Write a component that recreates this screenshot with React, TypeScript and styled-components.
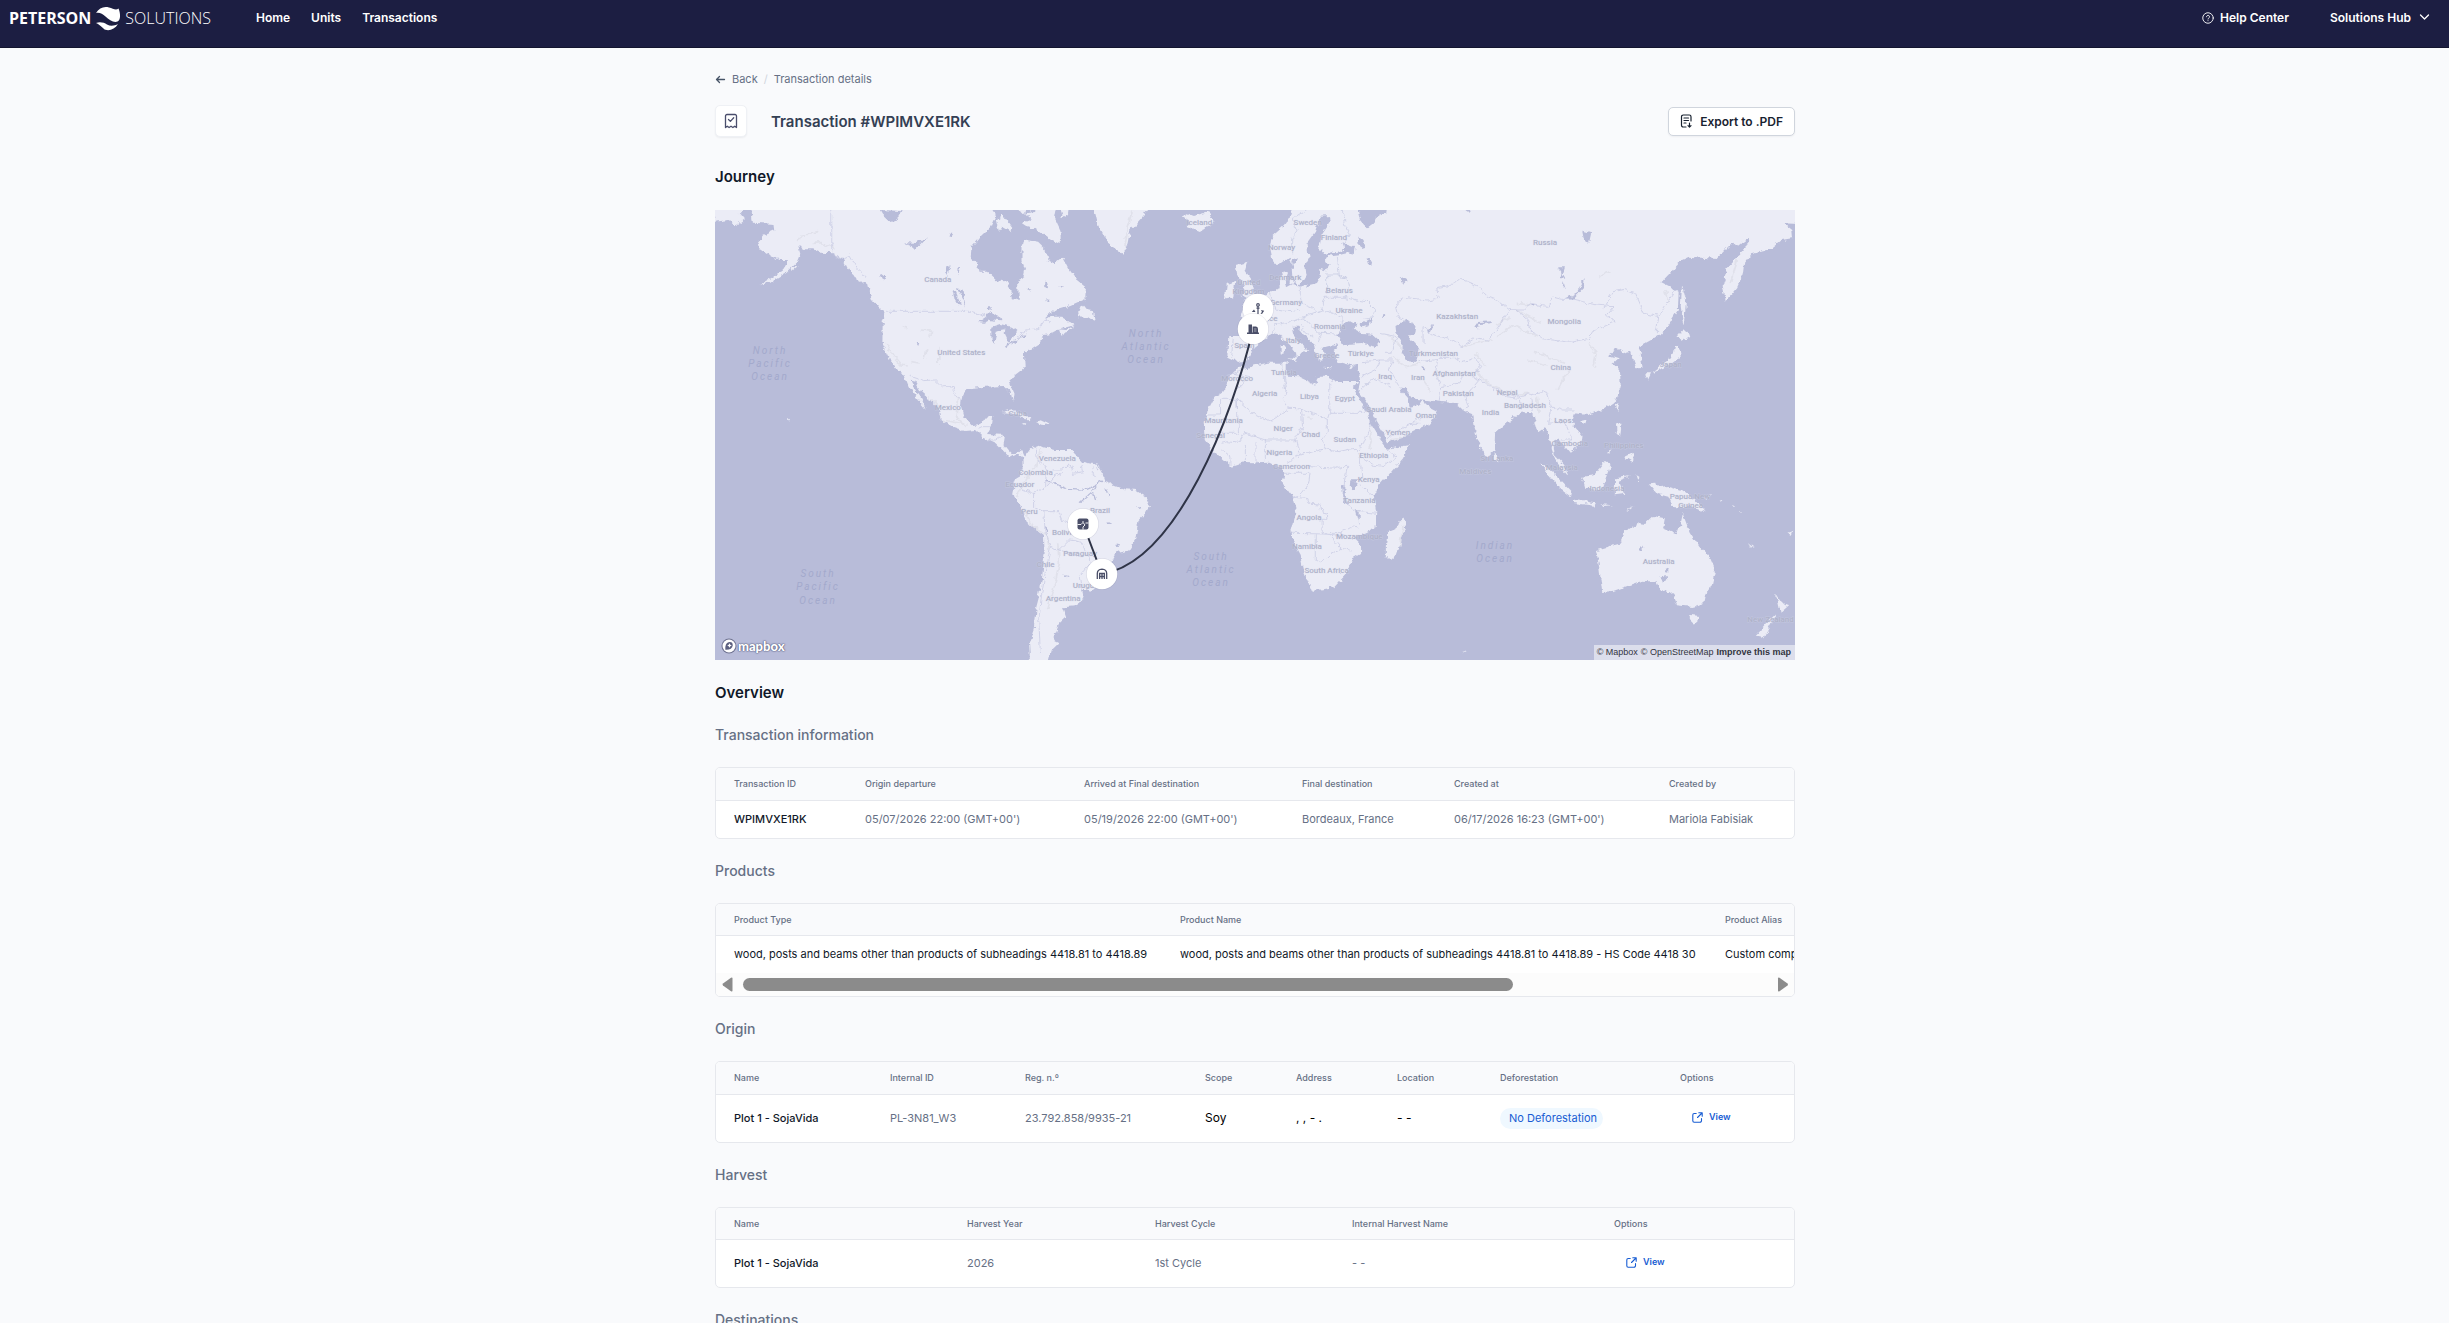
import React from 'react';
import styled, { createGlobalStyle, css } from 'styled-components';

const GlobalStyle = createGlobalStyle`
  *, *::before, *::after { box-sizing: border-box; }
  body {
    margin: 0;
    background: #f9fafc;
    color: #101828;
    font-family: Inter, "Liberation Sans", sans-serif;
    overflow: hidden auto;
    scrollbar-width: none;
  }
  h1, h2, h3 { margin: 0; }
  button { font-family: inherit; cursor: pointer; }
  a { text-decoration: none; color: inherit; }
`;

/* ---------- top bar ---------- */

const TopBar = styled.header`
  display: flex;
  align-items: center;
  justify-content: space-between;
  height: 48px;
  padding: 0 19px 12px 9px;
  background: #1c1e42;
  border-bottom: 1px solid #13152f;
  color: #fff;
`;

const TopGroup = styled.div`
  display: flex;
  align-items: center;
`;

const Brand = styled.a`
  display: flex;
  align-items: center;
  gap: 4px;
  margin-right: 45px;
  font-family: "Open Sans", "Noto Sans", sans-serif;
  font-size: 16px;
  line-height: 20px;
`;

const BrandStrong = styled.span`
  font-weight: 700;
`;

const BrandLight = styled.span`
  font-weight: 300;
`;

const Nav = styled.nav`
  display: flex;
  gap: 21px;
`;

const NavLink = styled.a`
  display: inline-flex;
  align-items: center;
  gap: 6px;
  font-size: 12px;
  line-height: 16px;
  font-weight: 600;
`;

const HubButton = styled.button`
  display: inline-flex;
  align-items: center;
  gap: 8px;
  margin-left: 41px;
  padding: 0;
  border: 0;
  background: none;
  color: inherit;
  font-size: 12px;
  line-height: 16px;
  font-weight: 600;
`;

/* ---------- page ---------- */

const Page = styled.main`
  padding: 23px 0 0 61px;
`;

const Content = styled.div`
  width: 100%;
  max-width: 1080px;
  margin: 0 auto;
`;

const Breadcrumb = styled.nav`
  display: flex;
  align-items: center;
  gap: 6px;
  font-size: 11px;
  line-height: 16px;
  color: #667085;
`;

const Slash = styled.span`
  color: #d0d5dd;
`;

const TitleRow = styled.div`
  display: flex;
  align-items: center;
  height: 32px;
  margin: 18px 0 28px;
`;

const TitleIcon = styled.div`
  display: flex;
  align-items: center;
  justify-content: center;
  width: 32px;
  height: 32px;
  margin-right: 24px;
  background: #fff;
  border: 1px solid #eff1f5;
  border-radius: 5px;
  box-shadow: 0 1px 2px rgba(16, 24, 40, 0.06);
`;

const Title = styled.h1`
  flex: 1;
  padding-top: 2px;
  font-size: 15px;
  line-height: 24px;
  font-weight: 600;
  color: #344054;
`;

const ExportButton = styled.button`
  display: inline-flex;
  align-items: center;
  gap: 8px;
  height: 29px;
  padding: 0 11px;
  background: #fff;
  border: 1px solid #d0d5dd;
  border-radius: 5px;
  box-shadow: 0 1px 2px rgba(16, 24, 40, 0.05);
  font-size: 12px;
  font-weight: 600;
  color: #182230;
`;

const SectionTitle = styled.h2`
  margin-bottom: 21px;
  font-size: 15px;
  line-height: 24px;
  font-weight: 600;
  color: #101828;
`;

const SubTitle = styled.h3`
  margin-bottom: 23px;
  font-size: 14px;
  line-height: 18px;
  font-weight: 500;
  color: #667085;
`;

/* ---------- map ---------- */

const MapFrame = styled.div`
  position: relative;
  margin-bottom: 21px;
  overflow: hidden;
`;

const MapSvg = styled.svg`
  display: block;
  width: 100%;
  height: auto;
  background: #b8bcd9;
`;

const CountryLabel = styled.text`
  font-family: Roboto, sans-serif;
  font-size: 8px;
  font-weight: 500;
  text-anchor: middle;
  fill: #aeb2c9;
  stroke: #dcdeed;
  stroke-opacity: 0.35;
  stroke-width: 1px;
  paint-order: stroke;
`;

const OceanLabel = styled.text`
  font-family: Roboto, sans-serif;
  font-size: 10px;
  font-style: italic;
  letter-spacing: 2px;
  text-anchor: middle;
  fill: #a3a9cc;
`;

const MapLogo = styled.a`
  position: absolute;
  left: 6px;
  bottom: 6px;
  display: flex;
  align-items: center;
  gap: 1px;
  font-family: Lato, sans-serif;
  font-size: 13px;
  line-height: 16px;
  font-weight: 900;
  color: #fff;
  text-shadow: 0 0 1px #5c6080, 0 0 1px #5c6080, 0 0 2px #5c6080;
`;

const Attribution = styled.div`
  position: absolute;
  right: 0;
  bottom: 0;
  display: flex;
  gap: 3px;
  padding: 0 4px 0 3px;
  background: rgba(255, 255, 255, 0.5);
  font-family: "Liberation Sans", sans-serif;
  font-size: 9px;
  line-height: 15px;
  color: #33353f;
`;

const Improve = styled.a`
  font-weight: 700;
`;

/* ---------- tables ---------- */

const Card = styled.div`
  margin-bottom: 23px;
  background: #fff;
  border: 1px solid #e6e8ed;
  border-radius: 5px;
  overflow: hidden;
`;

const Table = styled.table`
  width: 100%;
  table-layout: fixed;
  border-collapse: separate;
  border-spacing: 0;
`;

const Col = styled.col<{ $w?: number }>`
  width: ${(p) => (p.$w ? `${p.$w}px` : 'auto')};
`;

const Th = styled.th<{ $short?: boolean }>`
  height: ${(p) => (p.$short ? 32 : 33)}px;
  padding: 0 0 0 18px;
  background: #f9fafc;
  border-bottom: 1px solid #e6e8ed;
  text-align: left;
  white-space: nowrap;
  font-size: 9px;
  line-height: 12px;
  font-weight: 500;
  color: #667085;
`;

type Tone = 'strong' | 'muted' | 'dark' | 'plain';

const tones = {
  strong: css`font-size: 11px; font-weight: 500; color: #101828;`,
  muted: css`font-size: 11px; font-weight: 400; color: #667085;`,
  dark: css`font-size: 11px; font-weight: 400; color: #101828;`,
  plain: css`font-size: 12px; font-weight: 400; color: #000;`,
};

const Td = styled.td<{ $tone: Tone; $tall?: boolean }>`
  height: ${(p) => (p.$tall ? 47 : 37)}px;
  padding: 0 0 1px 18px;
  white-space: nowrap;
  line-height: 16px;
  ${(p) => tones[p.$tone]}
`;

const Badge = styled.span`
  display: inline-block;
  padding: 0 6px 0 9px;
  border-radius: 11px;
  background: #eff8ff;
  font-size: 11px;
  line-height: 21px;
  font-weight: 400;
  color: #175cd3;
`;

const ViewButton = styled.button`
  display: inline-flex;
  align-items: center;
  gap: 6px;
  padding: 0 12px;
  border: 0;
  background: none;
  font-size: 9px;
  line-height: 16px;
  font-weight: 600;
  color: #175cd3;
`;

const ScrollRow = styled.div`
  display: flex;
  align-items: center;
  height: 23px;
  padding: 0 5px;
  background: #fcfcfc;
`;

const ScrollArrow = styled.button`
  display: flex;
  padding: 0;
  border: 0;
  background: none;
`;

const ScrollTrack = styled.div`
  flex: 1;
  margin: 0 6px 0 9px;
`;

const ScrollThumb = styled.div`
  width: 75%;
  height: 13px;
  border-radius: 7px;
  background: #8b8b8b;
`;

/* ---------- icons ---------- */

const BrandMark = () => (
  <svg width="26" height="26" viewBox="0 0 26 26" aria-hidden="true" fill="#fff">
    <path d="M1 8C4 3 9 1 14 2.500C18 3.600 21 5.500 23.500 3.500C25.500 8 26 15 22.500 16.500C19 18 14 15 10.500 11.500C7.500 8.500 4 7 1 8Z" />
    <path d="M1 18C5 16.500 9 17.500 12 19.500C16 21.800 20 20.500 23 19C20 24 15 26 10.500 24.800C8 24 7 21 1 18Z" />
  </svg>
);

const HelpIcon = () => (
  <svg width="12" height="12" viewBox="0 0 24 24" fill="none" stroke="#fff" strokeWidth="1.8" strokeLinecap="round" aria-hidden="true">
    <circle cx="12" cy="12" r="10.500" />
    <path d="M9 9.500a3 3 0 1 1 4.500 2.700C12.400 12.900 12 13.200 12 14" />
    <path d="M12 17.300v.2" />
  </svg>
);

const ChevronDown = () => (
  <svg width="11" height="12" viewBox="0 0 11 12" fill="none" stroke="#fff" strokeWidth="1.3" strokeLinecap="round" strokeLinejoin="round" aria-hidden="true">
    <path d="M1.500 3l4 4 4-4" />
  </svg>
);

const ArrowLeft = () => (
  <svg width="11" height="10" viewBox="0 0 11 10" fill="none" stroke="#475467" strokeWidth="1.3" strokeLinecap="round" strokeLinejoin="round" aria-hidden="true">
    <path d="M9.500 5.500H1.500M4.500 2.500l-3 3 3 3" />
  </svg>
);

const ReceiptIcon = () => (
  <svg width="14" height="16" viewBox="0 0 14 16" fill="none" stroke="#4a4e6c" strokeWidth="1.3" strokeLinecap="round" strokeLinejoin="round" aria-hidden="true">
    <path d="M1.500 14.500V3a1.500 1.500 0 0 1 1.500-1.500h8A1.500 1.500 0 0 1 12.500 3V14.500l-1.800-1.300-1.800 1.300L7 13.200 5.100 14.500l-1.800-1.300Z" />
    <path d="M4.500 6.500l1.900 1.900 3.300-3.600" />
  </svg>
);

const ExportIcon = () => (
  <svg width="12" height="14" viewBox="0 0 12 14" fill="none" stroke="#182230" strokeWidth="1.2" strokeLinecap="round" strokeLinejoin="round" aria-hidden="true">
    <path d="M6 13H3.200A1.700 1.700 0 0 1 1.500 11.300V2.700A1.700 1.700 0 0 1 3.200 1h6.100A1.700 1.700 0 0 1 11 2.700V7M4 4h4.500M4 6.500h4.500M4 9h2M9.500 9v4M8 11.600l1.500 1.500 1.500-1.500" />
  </svg>
);

const ExternalIcon = () => (
  <svg width="11" height="11" viewBox="0 0 11 11" fill="none" stroke="#175cd3" strokeWidth="1.100" strokeLinecap="round" strokeLinejoin="round" aria-hidden="true">
    <path d="M4.200 1.500H2.200A1.500 1.500 0 0 0 .8 3v5.700a1.500 1.500 0 0 0 1.400 1.500H8a1.500 1.500 0 0 0 1.500-1.500V6.500M6.800.8h3.400v3.400M10 1L5.500 5.500" />
  </svg>
);

const Triangle = ({ flip }: { flip?: boolean }) => (
  <svg width="13" height="15" viewBox="0 0 13 15" aria-hidden="true">
    <path
      d={flip ? 'M2 1.500Q2 0 3.500 .8L11.500 6.500Q12.500 7.500 11.500 8.500L3.500 14.200Q2 15 2 13.500Z' : 'M11.500 1.500Q11.500 0 10 .8L2 6.500Q1 7.500 2 8.500L10 14.200Q11.500 15 11.500 13.500Z'}
      fill="#8b8b8b"
    />
  </svg>
);

/* ---------- map data ---------- */

type Place = [string, number, number];

const WEST_LAND = [
  // North and South America
  'M170 -9L105 -9 110 38 170 42 172 60 140 75 125 95 130 115 152 130 185 150 215 150 198 178 165 203 128 226 170 212 208 188 236 160 248 130 242 108 262 118 285 118 305 128 345 130 372 150 385 178 402 192 418 218 440 216 445 240 455 265 475 290 495 310 487 335 486 400 500 430 512 458 530 482 550 495 562 528 580 556 612 597 600 566 582 540 568 512 582 516 600 548 625 570 650 600 655 628 690 650 725 663 755 660 775 680 815 700 830 715 848 734 865 742 885 732 893 745 893 780 870 812 863 850 885 885 905 935 955 975 957 1030 950 1100 940 1160 930 1200 925 1260 912 1300 915 1359 965 1359 975 1320 995 1300 985 1280 1000 1240 1020 1220 1010 1192 1055 1188 1070 1160 1065 1135 1092 1146 1125 1110 1150 1055 1165 1030 1200 1022 1220 990 1230 930 1250 910 1263 885 1250 860 1220 840 1190 838 1135 815 1130 800 1110 765 1065 755 1035 720 985 720 955 712 940 704 915 715 896 742 888 724 865 736 850 720 838 705 842 675 790 672 805 642 808 618 785 620 770 642 745 646 722 620 714 590 718 555 735 535 785 530 840 528 858 545 865 575 870 552 855 515 872 494 902 470 900 430 925 412 945 398 955 375 975 372 1000 358 1044 345 1015 325 1008 320 978 320 955 328 985 300 1035 285 1078 265 1080 235 1050 210 1030 180 1010 140 985 160 965 150 960 120 935 95 895 88 890 110 890 150 900 180 895 205 880 212 882 270 865 265 850 215 815 210 790 185 765 185 760 155 742 145 745 110 770 80 800 50 815 15 800 -9Z',
  'M-9 -9L0 35 40 30 60 46 84 28 72 12 86 -9Z',
  'M890 40L920 28 900 10 905 -9 990 -9 985 20 1003 60 1004 102 980 90 940 62 905 50Z',
  'M815 28L835 12 862 50 858 64 835 50 824 66Z',
  'M875 -9L890 12 930 5 930 -9Z',
  'M1000 -9L1010 22 1025 12 1028 -9Z',
  'M1055 322L1070 285 1080 298 1100 300 1105 332 1080 324Z',
  'M1100 -9L1112 45 1140 100 1185 133 1198 100 1205 62 1240 22 1265 -9Z',
  'M1355 20L1372 10 1390 18 1435 6 1450 35 1408 66 1370 50 1378 35Z',
  'M832 606L862 598 890 612 922 627 900 628 875 612Z',
  'M930 640L945 628 970 640 950 648Z',
  'M890 642l14 1-4 4Z',
  'M220 170l20 2-14 12Z',
  'M995 358l25 2 20-12-12 18-28 8Z',
  'M212 626l6 6-5 4Z',
];

const WEST_WATER = [
  'M764 336L785 322 800 304 822 318 834 334 815 332 795 330 780 338Z',
  'M802 350L828 342 862 350 878 362 868 384 850 398 838 372 840 358 818 362 812 398 803 392Z',
  'M842 405L880 388 874 396 845 411Z',
  'M880 384L905 370 900 380Z',
  'M548 96L580 98 618 78 600 98 580 120 572 105Z',
  'M690 242L700 250 714 285 706 282 694 262Z',
  'M702 235L718 238 728 290 716 262Z',
  'M480 0L545 4 530 30 512 38 488 14Z',
  'M478 188L490 198 504 198 488 208Z',
  'M672 168L684 166 674 196 668 186Z',
  'M703 178l10-8-6 22Z',
  'M680 68l12 0-4 14-9-4Z',
  'M956 218l12 2 2 12-14-4Z',
  'M998 228l16 2-10 6Z',
  'M905 234l14 1-10 5Z',
  'M962 264l12 4-6 10Z',
  'M792 286l8 0 1 14-8-3Z',
  'M1164 1000l9 2-4 10-6-5Z',
  'M1015 1096l12 3-8 6Z',
  'M585 396l8 4-4 10Z',
  'M1222 887l16 10-8 0Z',
  'M958 948l8 6-4 10Z',
  'M1140 936l10 5-8 4Z',
];

const WEST_BORDERS = [
  'M339 0V130L372 148 392 138 410 170 438 200',
  'M500 304H740L785 318M880 378L905 360 940 356 958 330 975 335',
  'M565 498L605 512 640 510 660 530 685 530 702 560 716 570',
  'M765 655L775 650 798 650M790 690L815 690 838 676',
  'M935 710L932 745 962 770 960 830M983 780L1010 780 1030 760 1040 790 1070 785 1065 762M1098 768L1095 790 1108 800',
  'M895 775L865 820 888 835 925 850 925 890 955 905 1000 905 1010 930 1060 960M960 830L985 800 1010 790M960 830L925 850',
  'M955 905L958 960 975 1010 1000 1020 1030 990 1062 996 1085 1040 1090 1060M975 1010L960 1080 948 1160 940 1230 945 1330M1090 1060L1060 1095 1065 1130M1000 1020L1060 1040',
];

const WEST_RIVERS = ['M960 810L1020 835 1080 838 1130 815M1060 878L1095 845 1108 825M1105 870L1098 850M1145 858L1132 835'];

const WEST_RELIEF = [
  'M500 405L520 440 540 465 560 468M600 360L635 365 620 380M615 420L610 450M650 410V465M545 350l15 4M570 455l22 4',
  'M240 90L270 70 300 65M280 100L310 98 350 115M705 560L700 620 730 650M620 560L650 590M660 630L715 640',
  'M945 720L930 770 890 830 875 860M895 900L925 950 965 975 970 1020M995 1000L1000 1060 985 1130 965 1200',
  'M1212 0L1200 50 1190 110',
];

const EUROPE_LAND = [
  'M250 -9L242 20 225 45 185 80 180 112 190 158 205 166 238 140 248 172 250 200 262 226 278 215 290 195 285 165 296 145 290 100 315 65 330 20 360 18 362 35 335 75 328 115 345 135 400 120 425 126 385 136 350 140 343 152 362 162 350 184 328 180 330 205 322 220 280 230 240 225 228 232 225 215 234 188 225 180 210 200 212 235 180 245 160 265 130 285 105 282 95 320 108 345 102 378 55 378 52 440 85 456 112 450 132 410 165 385 190 368 212 376 240 402 258 425 260 448 276 425 298 422 270 400 250 375 245 350 262 350 288 382 312 402 318 440 335 452 345 432 335 412 372 408 385 400 374 430 385 455 425 466 458 456 450 515 720 560 720 -9Z',
  'M80 165L112 155 104 182 124 212 134 248 152 272 95 287 112 265 95 255 106 228 90 215 84 190Z',
  'M45 265L50 222 76 212 70 262Z',
  'M232 442L260 444 254 456Z',
  'M212 408L224 408 220 432 212 430Z',
  'M214 380l8 2-4 18Z',
  'M340 470l28 2-10 4Z',
  'M418 470l16-5-8 10Z',
  'M240 210l12 2-4 14-10-5Z',
];

const EUROPE_WATER = [
  'M385 378L395 340 420 334 442 346 428 356 458 372 490 374 512 395 500 411 455 402 400 406Z',
  'M448 342L488 322 478 346 458 352Z',
  'M340 413L372 404 366 416 345 418Z',
  'M402 98l30 10-4 26-22-10Z',
  'M442 80L460 86 466 116 446 102Z',
  'M250 148l14-6-4 16-14 4Z',
  'M470 148l14 6 0 12-10-4Z',
  'M572 203l18 6-12 12Z',
  'M440 -9L450 30 470 55 490 40 500 20 532 8 534 -9Z',
  'M520 308l6 8-10 10Z',
];

const EAST_LAND = [
  // Asia
  'M280 -9L250 300 300 470 306 515 300 540 326 578 350 626 375 670 383 697 410 690 460 665 510 640 528 605 500 590 490 570 470 586 450 590 444 566 425 545 420 525 440 540 460 566 500 570 540 576 590 580 600 600 630 612 635 650 655 710 675 740 695 720 697 670 730 640 765 610 795 605 810 620 822 667 845 650 860 700 865 730 885 770 906 798 898 765 870 735 866 690 880 682 900 710 914 728 945 702 948 675 920 640 928 610 965 615 1010 600 1045 575 1062 530 1060 490 1040 460 1056 445 1025 435 1052 414 1075 430 1092 425 1108 475 1125 474 1120 430 1112 412 1150 390 1180 370 1200 345 1228 300 1230 245 1215 235 1180 217 1240 150 1260 140 1340 147 1385 98 1400 112 1435 83 1420 120 1372 175 1357 220 1367 272 1400 232 1416 195 1420 160 1440 130 1500 115 1530 90 1562 84 1560 60 1535 40 1577 42 1577 -9Z',
  // Africa
  'M-53 473L-78 510 -88 540 -118 560 -138 600 -146 640 -143 690 -118 725 -68 770 -28 756 0 757 45 755 72 770 86 790 80 820 105 855 120 905 106 960 108 990 130 1032 140 1080 165 1143 230 1132 265 1092 278 1052 305 1035 305 1000 290 985 350 955 352 905 345 860 360 828 400 780 430 745 444 706 385 716 365 690 335 640 310 582 284 530 306 516 240 516 210 500 182 500 175 524 130 502 92 500 92 458 40 458 0 466 -20 474Z',
  // Oceania and the islands
  'M990 1020L1060 1000 1075 965 1115 940 1130 942 1155 918 1190 925 1185 955 1225 973 1235 945 1242 912 1262 965 1290 1010 1320 1040 1336 1080 1325 1130 1308 1150 1302 1180 1270 1188 1225 1183 1215 1155 1195 1140 1180 1145 1165 1115 1125 1112 1075 1130 1040 1143 1008 1146 1005 1120 998 1060Z',
  'M1260 1214L1292 1218 1276 1247Z',
  'M1510 1150L1530 1180 1552 1184 1526 1208 1520 1180Z',
  'M1515 1208L1476 1285 1453 1280 1490 1235Z',
  'M430 922L438 945 405 1046 380 1045 380 1005 385 965 410 955Z',
  'M1243 358L1264 376 1238 392 1224 380Z',
  'M1230 404L1236 440 1200 468 1150 487 1178 466 1212 442 1220 410Z',
  'M1133 490L1150 490 1140 512Z',
  'M1240 228L1252 270 1244 352 1236 290Z',
  'M828 760L865 785 921 845 918 862 880 832 850 792Z',
  'M918 868L990 880 985 887 925 879Z',
  'M950 800L985 795 1015 755 1032 765 1020 800 1005 840 960 836Z',
  'M1045 805L1092 798 1056 812 1072 852 1045 856Z',
  'M1048 643L1064 645 1060 682 1050 670Z',
  'M1072 742L1100 728 1098 757Z',
  'M1022 730l14-18-8 18Z',
  'M1048 585L1058 579 1052 604Z',
  'M946 632l18-4-8 14Z',
  'M696 728l10 8-2 18-8-4Z',
  'M1144 820L1165 818 1170 832 1200 828 1240 840 1280 870 1308 906 1270 890 1215 892 1200 860 1170 852Z',
  'M1078 900l24-12-18 14Z',
  'M1000 882l40 4-30 2Z',
  'M1108 796l8 4-2 14Z',
  'M1300 862l24-6-14 10Z',
  'M1352 866l8 6-4 2ZM1382 884l10 6-6 0ZM1405 902l6 6-4 0Z',
  'M1432 998l18 14-4 2Z',
  'M1546 970l14-8-4 12Z',
  'M600 1321l12 2-8 5Z',
];

const EAST_WATER = [
  'M408 348L440 330 466 344 462 375 444 376 476 415 468 456 440 454 426 430 430 400 410 370Z',
  'M904 268L935 250 957 203 955 235 925 268Z',
  'M500 355l15-10 2 8-10 10Z',
  'M640 350L650 336 690 334 686 340 655 342 645 356Z',
  'M278 808l18 0 1 24-16 6-6-14Z',
  'M880 172l20 0-6 20 8 14-16-2 4-16ZM896 216l6 22-8-8Z',
  'M950 62l26 8-6 28-16-14Z',
  'M326 148l14 6-4 12Z',
  'M424 200l16 10-12 8Z',
  'M1118 1012l10 4-8 6Z',
  'M1190 1072l10 4 0 12-8-2ZM1180 1100l12-6 2 20-10 4Z',
  'M800 282l14 2-8 8Z',
  'M366 318l12-6-4 12Z',
  'M483 468l10 3-6 8Z',
  'M600 -9L632 -9 620 8Z',
  'M252 825l6 50 14 14-8-22-2-40Z',
  'M292 895l12 14 0 34-6-22Z',
];

const EAST_BORDERS = [
  'M408 290L430 262 500 270 535 265 530 232 560 228 600 208 650 230 670 258 700 270 740 300 720 330 680 390 640 384 600 410 570 390 520 375 488 350 488 405M408 290L415 320 440 330',
  'M740 300L780 300 800 280 850 290 860 260 890 268 925 268 990 285 1040 290 1020 315 1045 335 980 365 970 385 915 397 835 386 800 360 790 325 760 300Z',
  'M1010 295L1040 245 1075 238 1105 250 1130 310 1172 320 1165 370M1172 320L1220 240',
  'M475 455L520 450 530 445 580 445 600 455 640 445 655 470 630 500 655 510 700 540 760 560 830 545 850 550 860 590 890 600 925 600',
  'M530 445L525 490 540 530 535 575M540 530L590 520 620 480M655 505L610 560 620 590 600 600M700 540L730 560 770 565 775 600M800 560L805 605M860 590L850 640 900 635 920 690 890 690',
  'M310 455L365 450 400 450 390 480 405 505 420 530M310 535L345 505 400 530M383 683L450 640 480 640M450 640L490 620M365 450L350 480 312 500',
  'M217 515V607H320M217 607L210 628 135 597 100 595 82 570 92 540 85 500M210 628V665L195 690 205 720 245 725 290 715 305 740 340 765 375 770 415 740 380 715M335 640L320 690 300 720',
  'M100 595L40 635 0 615 -52 568V598M135 597L138 650 118 682 120 690 30 690 0 680M118 690L130 735 90 760M130 735L195 715M30 690L30 755M-52 568H-100V615H-142M-52 568L-48 670H-110M0 680L-30 670 -48 700 -80 695 -100 700M0 755V700M-70 768L-70 740 -95 720M-28 755V705',
  'M85 790H160L155 820 130 855 107 862 150 865 155 880 190 882 195 910 210 912 212 928 195 928 195 968 250 968 280 950 300 955M160 770L235 775 270 765 262 800 255 860 270 890 300 905 352 910M108 970L195 972 240 975 285 985M175 975V1050L190 1060 220 1030 250 1015 275 1020M220 980L250 1015M235 1085l15 10M345 860L300 820 280 810M305 740L310 800',
];

const EAST_RELIEF = [
  'M375 375L400 385 430 420M400 440L440 470 480 460M480 500L510 545M600 410L640 400 690 390M640 430L670 470M640 480L665 510 700 535 760 552 800 550M700 345L740 320M760 300L830 340M700 380L750 345 800 370 830 380M810 425L850 440 900 460M790 450L850 465M880 540L900 500 915 480M970 400L990 430 985 470M1190 240L1200 280M1400 150L1380 220M1000 200L1030 185M760 280L800 285M820 560L825 610M430 950L420 1010M390 690L440 680M330 650L340 690 330 720M150 620L165 625',
];

const EUROPE_BORDERS = [
  'M245 130L245 90 258 60 250 25 290 0M400 0L405 40 418 75 400 105M385 165L382 140M345 195L385 195 410 205M385 165L388 200 410 205 418 235 405 260M268 228V250L278 282 320 300M180 245L195 300 240 305 270 300M345 262H405L430 268 470 275 495 300 490 320 462 325M345 262L335 300 370 310 400 325 395 345M280 320L335 300M195 345L240 335 280 320 300 345 330 370 385 372M190 368L195 345M100 378L155 392M70 380L65 440M335 370L325 400M270 345L290 370 310 378M350 195L350 250',
  'M52 500L120 465M70 490L120 500 78 540M215 455L222 520 228 545M510 370L560 380 545 430 525 430',
];

const COUNTRIES_WEST: Place[] = [
  ['Iceland', 1406, 35], ['Canada', 647, 208], ['United States', 715, 426], ['Mexico', 676, 590], ['Cuba', 879, 610],
  ['Venezuela', 994, 744], ['Colombia', 931, 785], ['Ecuador', 885, 823], ['Peru', 913, 904], ['Brazil', 1118, 899],
  ['Bolivia', 1013, 967], ['Paraguay', 1060, 1028], ['Chile', 960, 1063], ['Uruguay', 1082, 1125], ['Argentina', 1011, 1163],
  ['Morocco', 1516, 505], ['Mauritania', 1477, 631], ['Senegal', 1439, 674], ['Spain', 1537, 404], ['United', 1550, 215],
  ['Kingdom', 1549, 243], ['Algeria', 1596, 549], ['France', 1598, 323],
];

const COUNTRIES_EAST: Place[] = [
  ['Sweden', 153, 36], ['Finland', 229, 81], ['Norway', 77, 111], ['Denmark', 88, 202], ['Belarus', 245, 240], ['Germany', 90, 276],
  ['Ukraine', 273, 300], ['Romania', 217, 347], ['Italy', 111, 389], ['Greece', 208, 436], ['Türkiye', 307, 430], ['Tunisia', 84, 485],
  ['Libya', 158, 559], ['Egypt', 261, 565], ['Iraq', 378, 497], ['Iran', 473, 502], ['Türkmenistan', 518, 429],
  ['Afghanistan', 578, 488], ['Pakistan', 590, 548], ['Kazakhstan', 587, 317], ['Russia', 842, 96], ['Mongolia', 898, 334],
  ['China', 888, 470], ['Nepal', 732, 547], ['Bangladesh', 784, 586], ['India', 684, 607], ['Laos', 894, 630], ['Japan', 1207, 461],
  ['Saudi Arabia', 389, 596], ['Oman', 497, 615], ['Yemen', 415, 667], ['Niger', 82, 653], ['Chad', 162, 672], ['Sudan', 261, 687],
  ['Nigeria', 71, 726], ['Ethiopia', 345, 735], ['Cameroon', 106, 769], ['Kenya', 330, 808], ['Tanzania', 303, 869],
  ['Angola', 157, 922], ['Mozambique', 303, 978], ['Namibia', 151, 1008], ['South Africa', 208, 1079], ['Sri Lanka', 702, 743],
  ['Maldives', 640, 784], ['Cambodia', 914, 700], ['Philippines', 1071, 706], ['Malaysia', 891, 772], ['Indonesia', 1022, 833],
  ['Papua New', 1263, 857], ['Guinea', 1265, 885], ['Australia', 1172, 1052], ['New Zealand', 1497, 1228],
];

const OCEANS: Place[] = [
  ['North', 55, 141], ['Pacific', 55, 154], ['Ocean', 55, 167],
  ['North', 431, 124], ['Atlantic', 431, 137], ['Ocean', 431, 150],
  ['South', 103, 364], ['Pacific', 103, 377], ['Ocean', 103, 391],
  ['South', 496, 347], ['Atlantic', 496, 360], ['Ocean', 496, 373],
  ['Indian', 780, 336], ['Ocean', 780, 349],
];

const LAND = '#ebecf6';
const WATER = '#b8bcd9';
const BORDER = '#c3c7e1';
const INK = '#2f3447';
const PIN = '#4a4e68';

const WEST = 'scale(.3444 .3333)';
const EAST = 'translate(540 0) scale(.3444 .3333)';
const EUROPE = 'translate(495 0) scale(.3333)';

const Shapes = ({ paths, transform, fill }: { paths: string[]; transform: string; fill: string }) => (
  <path d={paths.join('')} transform={transform} fill={fill} />
);

const Lines = ({ paths, transform, color, width = 2 }: { paths: string[]; transform: string; color: string; width?: number }) => (
  <path d={paths.join('')} transform={transform} fill="none" stroke={color} strokeWidth={width} strokeLinejoin="round" />
);

const Pin = ({ x, y, children }: { x: number; y: number; children: React.ReactNode }) => (
  <g transform={`translate(${x} ${y})`}>
    <circle r="16" fill="#1c1e42" opacity=".08" />
    <circle r="15.300" fill="#fff" />
    {children}
  </g>
);

const JourneyMap = () => (
  <MapFrame>
    <MapSvg viewBox="0 0 1080 450" role="img" aria-label="Journey map">
      <defs>
        <filter id="coast" x="0" y="0" width="1080" height="450" filterUnits="userSpaceOnUse">
          <feTurbulence type="fractalNoise" baseFrequency=".16" numOctaves="3" seed="4" result="noise" />
          <feDisplacementMap in="SourceGraphic" in2="noise" scale="6" xChannelSelector="R" yChannelSelector="G" />
        </filter>
      </defs>
      <g filter="url(#coast)">
        <Shapes paths={WEST_LAND} transform={WEST} fill={LAND} />
        <Shapes paths={EAST_LAND} transform={EAST} fill={LAND} />
        <Shapes paths={EUROPE_LAND} transform={EUROPE} fill={LAND} />
        <Shapes paths={WEST_WATER} transform={WEST} fill={WATER} />
        <Shapes paths={EAST_WATER} transform={EAST} fill={WATER} />
        <Shapes paths={EUROPE_WATER} transform={EUROPE} fill={WATER} />
        <Lines paths={WEST_RELIEF} transform={WEST} color="#e0e1eb" width={5} />
        <Lines paths={EAST_RELIEF} transform={EAST} color="#e0e1eb" width={5} />
        <Lines paths={WEST_BORDERS} transform={WEST} color={BORDER} />
        <Lines paths={WEST_RIVERS} transform={WEST} color={WATER} width={4} />
        <Lines paths={EAST_BORDERS} transform={EAST} color={BORDER} />
        <Lines paths={EUROPE_BORDERS} transform={EUROPE} color={BORDER} />
      </g>
      {OCEANS.map(([name, x, y], i) => (
        <OceanLabel key={i} x={x} y={y + 3}>{name}</OceanLabel>
      ))}
      {COUNTRIES_WEST.map(([name, x, y]) => (
        <CountryLabel key={name} x={x * 0.3444} y={y / 3 + 3}>{name}</CountryLabel>
      ))}
      {COUNTRIES_EAST.map(([name, x, y]) => (
        <CountryLabel key={name} x={540 + x * 0.3444} y={y / 3 + 3}>{name}</CountryLabel>
      ))}
      <g fill="none" stroke={INK} strokeWidth="2">
        <path d="M538 119C518 205 462 352 387 364" />
        <path d="M368 314L387 364" />
      </g>
      <Pin x={543} y={99}>
        <g fill="none" stroke={PIN} strokeWidth="1.200">
          <circle cx="0" cy="-4" r="1.300" />
          <path d="M0 -2.500V5M-1.500 -.8H1.500" />
        </g>
        <path d="M-6.200 3L-4 .5 -2.500 3ZM3 1L6.200 1.800 5 3.500 4 5 2.500 4.500 4 3Z" fill={PIN} />
      </Pin>
      <Pin x={538} y={119}>
        <path d="M-4.500 4V-4.500H-1V4ZM-.4 4V-2.500H3Q5 -2.500 5 0V4ZM-6 3.500H6V5H-6Z" fill={PIN} />
        <path d="M1 0H3.500M1 2H3.500" stroke="#fff" strokeWidth=".5" />
      </Pin>
      <Pin x={368} y={314}>
        <rect x="-5.500" y="-5.500" width="11" height="11" rx="2" fill={PIN} />
        <path d="M-5.500 .5H-2L0 -1.500 2 1 0 3V5.500M0 -1.500V-3M2.500 -1H5.500" fill="none" stroke="#fff" strokeWidth=".9" />
      </Pin>
      <Pin x={387} y={364}>
        <path d="M-4.700 5V-.5Q-4.700 -4.500 0 -4.800Q4.700 -4.500 4.700 -.5V5M-2.400 5V-.5H2.400V5M0 0V5M-2.400 2.500H2.400" fill="none" stroke={PIN} strokeWidth="1.300" />
      </Pin>
    </MapSvg>
    <MapLogo href="#mapbox">
      <svg width="16" height="16" viewBox="0 0 16 16" aria-hidden="true">
        <circle cx="8" cy="8" r="7.500" fill="#5c6080" opacity=".8" />
        <circle cx="8" cy="8" r="6.500" fill="#fff" />
        <path d="M4.300 11.700Q4 5 7.500 4.200Q12 3.500 11.700 7.500Q11.200 12 4.300 11.700Z" fill="#5c6080" />
        <path d="M8.500 5.200l.8 1.500 1.500.8-1.500.8-.8 1.500-.8-1.500L6.200 7.500l1.500-.8Z" fill="#fff" />
      </svg>
      mapbox
    </MapLogo>
    <Attribution>
      <a href="#mapbox-about">© Mapbox</a>
      <a href="#osm">© OpenStreetMap</a>
      <Improve href="#improve">Improve this map</Improve>
    </Attribution>
  </MapFrame>
);

/* ---------- table assembly ---------- */

interface Cell {
  tone: Tone;
  content: React.ReactNode;
}

interface DataTableProps {
  label: string;
  heads: string[];
  widths: number[];
  cells: Cell[];
  tall?: boolean;
  shortHead?: boolean;
}

const DataTable = ({ label, heads, widths, cells, tall, shortHead }: DataTableProps) => (
  <Table aria-label={label}>
    <colgroup>
      {heads.map((h, i) => <Col key={h} $w={widths[i]} />)}
    </colgroup>
    <thead>
      <tr>{heads.map((h) => <Th key={h} $short={shortHead}>{h}</Th>)}</tr>
    </thead>
    <tbody>
      <tr>{cells.map((c, i) => <Td key={i} $tone={c.tone} $tall={tall}>{c.content}</Td>)}</tr>
    </tbody>
  </Table>
);

const View = () => (
  <ViewButton type="button"><ExternalIcon />View</ViewButton>
);

export default function App() {
  return (
    <>
      <GlobalStyle />
      <TopBar>
        <TopGroup>
          <Brand href="#home">
            <BrandStrong>PETERSON</BrandStrong>
            <BrandMark />
            <BrandLight>SOLUTIONS</BrandLight>
          </Brand>
          <Nav>
            <NavLink href="#home">Home</NavLink>
            <NavLink href="#units">Units</NavLink>
            <NavLink href="#transactions">Transactions</NavLink>
          </Nav>
        </TopGroup>
        <TopGroup>
          <NavLink href="#help"><HelpIcon />Help Center</NavLink>
          <HubButton type="button">Solutions Hub<ChevronDown /></HubButton>
        </TopGroup>
      </TopBar>
      <Page>
        <Content>
          <Breadcrumb aria-label="Breadcrumb">
            <ArrowLeft />
            <a href="#back">Back</a>
            <Slash>/</Slash>
            <span>Transaction details</span>
          </Breadcrumb>
          <TitleRow>
            <TitleIcon><ReceiptIcon /></TitleIcon>
            <Title>Transaction #WPIMVXE1RK</Title>
            <ExportButton type="button"><ExportIcon />Export to .PDF</ExportButton>
          </TitleRow>

          <SectionTitle>Journey</SectionTitle>
          <JourneyMap />

          <SectionTitle>Overview</SectionTitle>
          <SubTitle>Transaction information</SubTitle>
          <Card>
            <DataTable
              label="Transaction information"
              heads={['Transaction ID', 'Origin departure', 'Arrived at Final destination', 'Final destination', 'Created at', 'Created by']}
              widths={[131, 219, 218, 152, 215]}
              cells={[
                { tone: 'strong', content: 'WPIMVXE1RK' },
                { tone: 'muted', content: "05/07/2026 22:00 (GMT+00')" },
                { tone: 'muted', content: "05/19/2026 22:00 (GMT+00')" },
                { tone: 'muted', content: 'Bordeaux, France' },
                { tone: 'muted', content: "06/17/2026 16:23 (GMT+00')" },
                { tone: 'muted', content: 'Mariola Fabisiak' },
              ]}
            />
          </Card>

          <SubTitle>Products</SubTitle>
          <Card>
            <DataTable
              label="Products"
              shortHead
              heads={['Product Type', 'Product Name', 'Product Alias']}
              widths={[446, 545]}
              cells={[
                { tone: 'dark', content: 'wood, posts and beams other than products of subheadings 4418.81 to 4418.89' },
                { tone: 'dark', content: 'wood, posts and beams other than products of subheadings 4418.81 to 4418.89 - HS Code 4418 30' },
                { tone: 'dark', content: 'Custom comp' },
              ]}
            />
            <ScrollRow>
              <ScrollArrow type="button" aria-label="Scroll left"><Triangle /></ScrollArrow>
              <ScrollTrack><ScrollThumb /></ScrollTrack>
              <ScrollArrow type="button" aria-label="Scroll right"><Triangle flip /></ScrollArrow>
            </ScrollRow>
          </Card>

          <SubTitle>Origin</SubTitle>
          <Card>
            <DataTable
              label="Origin"
              tall
              heads={['Name', 'Internal ID', 'Reg. n.º', 'Scope', 'Address', 'Location', 'Deforestation', 'Options']}
              widths={[156, 135, 180, 91, 101, 103, 180]}
              cells={[
                { tone: 'strong', content: 'Plot 1 - SojaVida' },
                { tone: 'muted', content: 'PL-3N81_W3' },
                { tone: 'muted', content: '23.792.858/9935-21' },
                { tone: 'plain', content: 'Soy' },
                { tone: 'plain', content: ', , - .' },
                { tone: 'plain', content: '- -' },
                { tone: 'plain', content: <Badge>No Deforestation</Badge> },
                { tone: 'plain', content: <View /> },
              ]}
            />
          </Card>

          <SubTitle>Harvest</SubTitle>
          <Card>
            <DataTable
              label="Harvest"
              tall
              shortHead
              heads={['Name', 'Harvest Year', 'Harvest Cycle', 'Internal Harvest Name', 'Options']}
              widths={[233, 188, 197, 262]}
              cells={[
                { tone: 'strong', content: 'Plot 1 - SojaVida' },
                { tone: 'muted', content: '2026' },
                { tone: 'muted', content: '1st Cycle' },
                { tone: 'muted', content: '- -' },
                { tone: 'plain', content: <View /> },
              ]}
            />
          </Card>

          <SubTitle>Destinations</SubTitle>
        </Content>
      </Page>
    </>
  );
}
